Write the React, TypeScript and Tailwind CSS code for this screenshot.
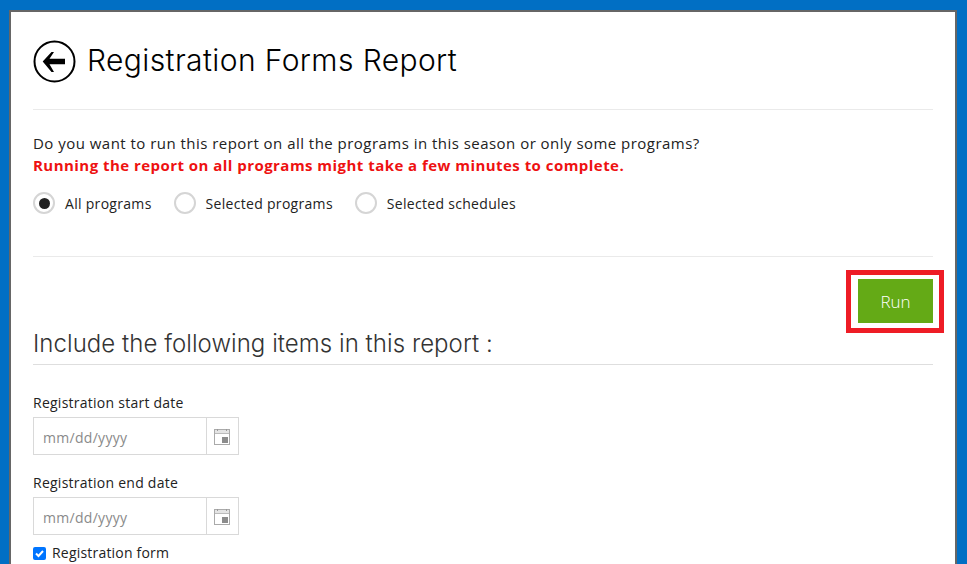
import React from "react";

const body = "font-['Open_Sans','Noto_Sans',sans-serif]";

const CalendarIcon = () => (
  <svg width="17" height="17" viewBox="0 0 17 17" fill="none">
    <rect x="0.5" y="1.5" width="15" height="15" fill="#fff" stroke="#aaa" />
    <rect x="1" y="2" width="14" height="3" fill="#e4e4e4" />
    <rect x="3" y="1" width="1" height="2" fill="#999" />
    <rect x="12" y="1" width="1" height="2" fill="#999" />
    <rect x="1" y="5" width="14" height="1" fill="#bbb" />
    <rect x="8" y="9" width="6" height="6" fill="#8c8c8c" />
  </svg>
);

const Radio = ({ label, checked }: { label: string; checked?: boolean }) => (
  <label className="flex items-center gap-[10px]">
    <span className="flex h-[22px] w-[22px] items-center justify-center rounded-full border-2 border-[#d5d5d5] bg-white">
      {checked && <span className="h-[11px] w-[11px] rounded-full bg-[#222]" />}
    </span>
    <span className="text-[14px] tracking-[0.3px] text-[#222]">{label}</span>
  </label>
);

const DateField = ({ label, className }: { label: string; className?: string }) => (
  <div className={className}>
    <div className="h-[20px] text-[14px] leading-[20px] tracking-[0.25px] text-[#222]">{label}</div>
    <div className="mt-[4px] flex h-[38px] w-[206px] border border-[#d9d9d9]">
      <div className="flex flex-1 items-center pl-[9px] pt-[2px] text-[14px] tracking-[0.3px] text-[#8a8a8a]">mm/dd/yyyy</div>
      <div className="flex w-[32px] items-center justify-center border-l border-[#d9d9d9]">
        <CalendarIcon />
      </div>
    </div>
  </div>
);

export default function App() {
  return (
    <div className={`h-[564px] w-[967px] overflow-hidden bg-[#016fc4] pl-[9px] pr-[10px] pt-[10px] ${body}`}>
      <div className="h-[554px] overflow-hidden border-l-2 border-r-2 border-t-2 border-[#666] bg-white pl-[22px] pr-[22px]">
        <div className="flex h-[98px] items-center gap-[11px] border-b border-[#eaeaea] pt-[2px]">
          <svg width="43" height="43" viewBox="0 0 43 43" fill="none">
            <circle cx="21.5" cy="21.5" r="20" stroke="#000" strokeWidth="2" />
            <path d="M18.5 12 L9.7 21.5 L18.5 32 L21 32 L16.5 24.3 L32 24.3 L32 18.7 L16.5 18.7 L21 12 Z" fill="#000" />
          </svg>
          <h1 className="mt-[-3px] font-['Inter','Open_Sans',sans-serif] text-[30px] font-light tracking-[0.4px] text-black">
            Registration Forms Report
          </h1>
        </div>

        <div className="h-[147px] border-b border-[#eaeaea] pt-[22px]">
          <p className="text-[15px] leading-[22px] tracking-[0.47px] text-[#222]">
            Do you want to run this report on all the programs in this season or only some programs?
          </p>
          <p className="text-[15px] font-bold leading-[22px] tracking-[0.46px] text-[#ee1111]">
            Running the report on all programs might take a few minutes to complete.
          </p>
          <div className="mt-[16px] flex gap-[22px]">
            <Radio label="All programs" checked />
            <Radio label="Selected programs" />
            <Radio label="Selected schedules" />
          </div>
        </div>

        <div className="mt-[22px] flex justify-end">
          <div className="relative">
            <button className="h-[44px] w-[75px] bg-[#64aa16] pt-[2px] text-[17px] font-light text-white">Run</button>
            <div className="absolute left-[-12px] top-[-9px] h-[63px] w-[98px] border-[5px] border-[#ee1c25]" />
          </div>
        </div>

        <h2 className="mt-[4px] flex h-[38px] items-center border-b border-[#dedede] pb-[3px] font-['Inter','Open_Sans',sans-serif] text-[24px] font-light tracking-[0.05px] text-[#333]">
          Include the following items in this report :
        </h2>

        <DateField label="Registration start date" className="mt-[28px]" />
        <DateField label="Registration end date" className="mt-[18px]" />

        <label className="mt-[8px] flex items-center gap-[6px]">
          <span className="flex h-[13px] w-[13px] items-center justify-center rounded-[2px] bg-[#0075ff]">
            <svg width="11" height="11" viewBox="0 0 11 11" fill="none">
              <path d="M2 5.5 L4.5 8 L9 3" stroke="#fff" strokeWidth="2" />
            </svg>
          </span>
          <span className="text-[14px] leading-[20px] tracking-[0.2px] text-[#222]">Registration form</span>
        </label>
      </div>
    </div>
  );
}
